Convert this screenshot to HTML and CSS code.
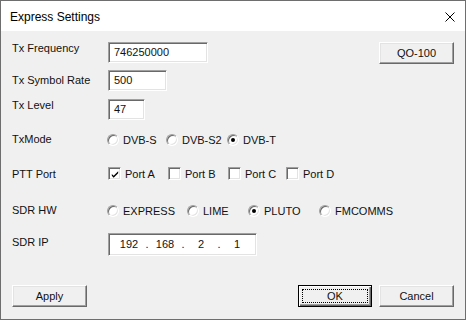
FILE: index.html
```html
<!DOCTYPE html>
<html>
<head>
<meta charset="utf-8">
<link rel="stylesheet" href="styles.css">
</head>
<body>
<div class="window">
  <div class="titlebar">
    <span class="title">Express Settings</span>
    <svg class="close" width="10" height="10" viewBox="0 0 10 10"><path d="M0.5 0.5 L9.5 9.5 M9.5 0.5 L0.5 9.5" stroke="#000" stroke-width="1"/></svg>
  </div>
  <div class="body">
    <div class="row r1">
      <span class="label">Tx Frequency</span>
      <span class="field w100">746250000</span>
      <span class="btn qo">QO-100</span>
    </div>
    <div class="row r2">
      <span class="label lp4">Tx Symbol Rate</span>
      <span class="field w59">500</span>
    </div>
    <div class="row r3">
      <span class="label">Tx Level</span>
      <span class="field w37">47</span>
    </div>
    <div class="row r4 line">
      <span class="label">TxMode</span>
      <span class="opt o60"><span class="radio"></span>DVB-S</span>
      <span class="opt o62"><span class="radio"></span>DVB-S2</span>
      <span class="opt"><span class="radio on"></span>DVB-T</span>
    </div>
    <div class="row r5 line">
      <span class="label lp2">PTT Port</span>
      <span class="opt o60 c"><span class="check"><svg width="11" height="11" viewBox="0 0 11 11"><path d="M2 5 L4 7 L9 2 L9 4 L4 9 L2 7 Z" fill="#000"/></svg></span>Port A</span>
      <span class="opt o60 c"><span class="check"></span>Port B</span>
      <span class="opt o58 c"><span class="check"></span>Port C</span>
      <span class="opt c"><span class="check"></span>Port D</span>
    </div>
    <div class="row r6 line">
      <span class="label">SDR HW</span>
      <span class="opt o81"><span class="radio"></span>EXPRESS</span>
      <span class="opt o62"><span class="radio"></span>LIME</span>
      <span class="opt o72"><span class="radio on"></span>PLUTO</span>
      <span class="opt"><span class="radio"></span>FMCOMMS</span>
    </div>
    <div class="row r7">
      <span class="label lp3">SDR IP</span>
      <span class="field ip">
        <span class="oct">192</span><span class="dot">.</span><span class="oct">168</span><span class="dot">.</span><span class="oct">2</span><span class="dot">.</span><span class="oct">1</span>
      </span>
    </div>
    <div class="buttons">
      <span class="btn">Apply</span>
      <span class="spacer"></span>
      <span class="btn default"><span class="focus">OK</span></span>
      <span class="btn">Cancel</span>
    </div>
  </div>
</div>
</body>
</html>
```
FILE: styles.css
```css
html, body {
  margin: 0;
  padding: 0;
  background: #f0f0f0;
}
.window {
  box-sizing: border-box;
  width: 466px;
  height: 320px;
  border: 1px solid #6e6e6e;
  background: #f0f0f0;
  display: flex;
  flex-direction: column;
  font-family: "Liberation Sans", Arial, sans-serif;
  font-size: 11px;
  color: #111;
}
.titlebar {
  height: 30px;
  background: #fff;
  display: flex;
  align-items: center;
  padding: 0 10px 0 9px;
}
.title {
  font-size: 12px;
  flex: 1;
  padding-top: 1px;
  color: #000;
}
.close {
  display: block;
  margin-top: 1px;
}
.body {
  flex: 1;
  display: flex;
  flex-direction: column;
  padding-left: 11px;
  padding-right: 11px;
}
.row {
  display: flex;
  align-items: flex-start;
}
.row.line {
  align-items: center;
  height: 13px;
}
.label {
  width: 96px;
  line-height: 13px;
  flex: none;
}
.lp2 { padding-top: 2px; }
.lp3 { padding-top: 3px; }
.lp4 { padding-top: 4px; }
.r1 { margin-top: 11px; }
.r2 { margin-top: 6px; }
.r3 { margin-top: 8px; }
.r4 { margin-top: 13px; }
.r5 { margin-top: 21px; }
.r6 { margin-top: 24px; }
.r7 { margin-top: 16px; }

.field {
  box-sizing: border-box;
  height: 21px;
  background: #fff;
  border: 1px solid;
  border-color: #a0a0a0 #fff #fff #a0a0a0;
  box-shadow: inset 1px 1px 0 #696969, inset -1px -1px 0 #e3e3e3;
  padding: 3px 0 0 5px;
  line-height: 13px;
}
.w100 { width: 100px; }
.w59 { width: 59px; }
.w37 { width: 37px; }
.field.ip {
  width: 149px;
  height: 23px;
  display: flex;
  padding: 4px 0 0 6px;
}
.oct {
  width: 28px;
  text-align: center;
}
.dot {
  width: 8px;
  text-align: center;
}

.opt {
  display: flex;
  align-items: center;
  flex: none;
  margin-left: -1px;
}
.opt.c { margin-left: 0; }
.o60 { width: 60px; }
.o62 { width: 62px; }
.o58 { width: 58px; }
.o72 { width: 72px; }
.o81 { width: 81px; }

.radio {
  box-sizing: border-box;
  width: 12px;
  height: 12px;
  border-radius: 50%;
  border: 1px solid;
  border-color: #a0a0a0 #fff #fff #a0a0a0;
  box-shadow: inset 1px 1px 0 #696969, inset -1px -1px 0 #e3e3e3;
  background: #fff;
  margin-right: 4px;
  position: relative;
  flex: none;
}
.radio.on::after {
  content: "";
  position: absolute;
  left: 3px;
  top: 3px;
  width: 4px;
  height: 4px;
  border-radius: 50%;
  background: #000;
}
.check {
  box-sizing: border-box;
  width: 13px;
  height: 13px;
  border: 1px solid;
  border-color: #a0a0a0 #fff #fff #a0a0a0;
  box-shadow: inset 1px 1px 0 #696969, inset -1px -1px 0 #e3e3e3;
  background: #fff;
  margin-right: 4px;
  flex: none;
  display: flex;
  align-items: center;
  justify-content: center;
}
.check svg { display: block; margin: 1px 0 0 1px; }

.btn {
  box-sizing: border-box;
  width: 75px;
  height: 22px;
  background: #f0f0f0;
  border: 1px solid;
  border-color: #fff #696969 #696969 #fff;
  box-shadow: inset -1px -1px 0 #a0a0a0, inset 1px 1px 0 #e3e3e3;
  display: flex;
  align-items: center;
  justify-content: center;
  flex: none;
}
.qo {
  margin-left: auto;
}
.buttons {
  display: flex;
  margin-top: 29px;
}
.spacer { flex: 1; }
.btn.default {
  width: 74px;
  margin-right: 7px;
  border: 1px solid #000;
  box-shadow: inset 1px 1px 0 #fff, inset -1px -1px 0 #696969, inset -2px -2px 0 #a0a0a0;
  padding: 3px;
}
.focus {
  box-sizing: border-box;
  width: 100%;
  height: 100%;
  border: 1px dotted #000;
  display: flex;
  align-items: center;
  justify-content: center;
}
```
